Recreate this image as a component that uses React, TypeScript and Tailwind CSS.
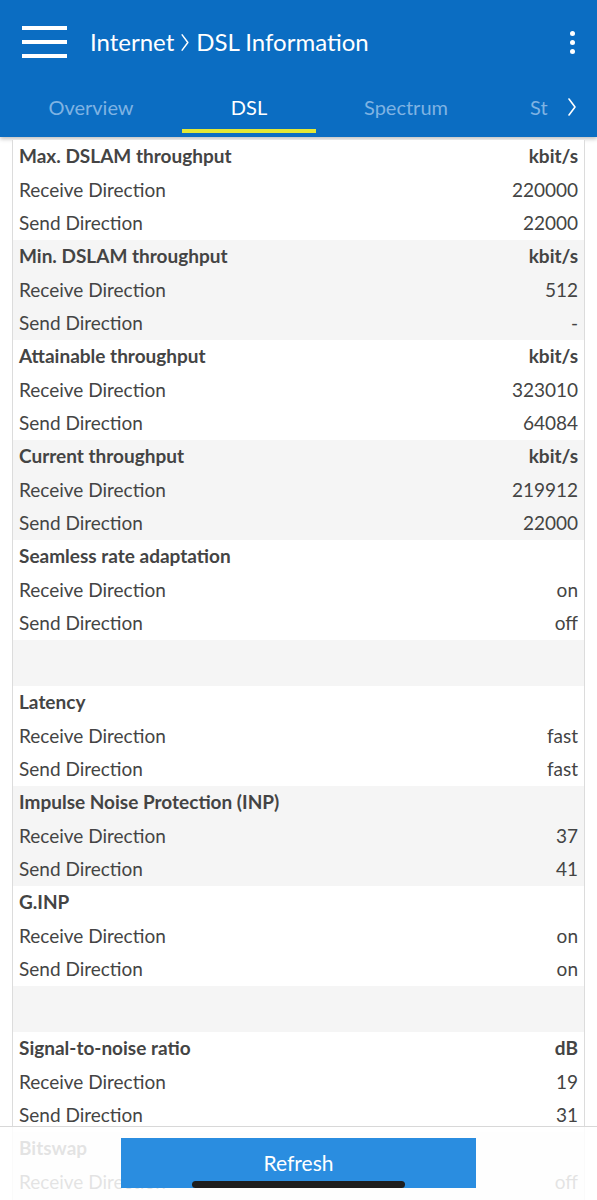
import React from 'react';

type Row = { label: string; value: string };
type Group = { title: string; unit?: string; rows: Row[]; shaded: boolean } | { spacer: true };

const rd = (v: string) => ({ label: 'Receive Direction', value: v });
const sd = (v: string) => ({ label: 'Send Direction', value: v });

const groups: Group[] = [
    { title: 'Max. DSLAM throughput', unit: 'kbit/s', rows: [rd('220000'), sd('22000')], shaded: false },
    { title: 'Min. DSLAM throughput', unit: 'kbit/s', rows: [rd('512'), sd('-')], shaded: true },
    { title: 'Attainable throughput', unit: 'kbit/s', rows: [rd('323010'), sd('64084')], shaded: false },
    { title: 'Current throughput', unit: 'kbit/s', rows: [rd('219912'), sd('22000')], shaded: true },
    { title: 'Seamless rate adaptation', rows: [rd('on'), sd('off')], shaded: false },
    { spacer: true },
    { title: 'Latency', rows: [rd('fast'), sd('fast')], shaded: false },
    { title: 'Impulse Noise Protection (INP)', rows: [rd('37'), sd('41')], shaded: true },
    { title: 'G.INP', rows: [rd('on'), sd('on')], shaded: false },
    { spacer: true },
    { title: 'Signal-to-noise ratio', unit: 'dB', rows: [rd('19'), sd('31')], shaded: false },
    { title: 'Bitswap', rows: [rd('off'), sd('on')], shaded: true },
];

const Chevron = ({ className = '' }: { className?: string }) => (
    <svg viewBox="0 0 10 20" className={className} fill="none" stroke="currentColor" strokeWidth={1.6} strokeLinecap="round" strokeLinejoin="round">
        <path d="M2 2l6 8-6 8" />
    </svg>
);

const App: React.FC = () => {
    return (
        <div className="min-h-screen bg-white text-[#444]" style={{ fontFamily: 'Lato, "Noto Sans", sans-serif' }}>
            {/* Header */}
            <header className="bg-[#0b6dc2] text-white shadow-[0_2px_4px_rgba(0,0,0,0.25)]">
                <div className="h-[84px] flex items-center pl-[22px] pr-[22px]">
                    <div className="flex flex-col gap-[10px] w-[45px]">
                        <span className="block h-[4px] bg-white" />
                        <span className="block h-[4px] bg-white" />
                        <span className="block h-[4px] bg-white" />
                    </div>
                    <div className="ml-[23px] flex items-center text-[24px] leading-none">
                        <span>Internet</span>
                        <Chevron className="w-[10px] h-[19px] mx-[6px]" />
                        <span>DSL Information</span>
                    </div>
                    <div className="ml-auto flex flex-col gap-[4px] items-center">
                        <span className="block w-[5px] h-[5px] rounded-full bg-white" />
                        <span className="block w-[5px] h-[5px] rounded-full bg-white" />
                        <span className="block w-[5px] h-[5px] rounded-full bg-white" />
                    </div>
                </div>
                <div className="h-[53px] flex items-stretch text-[20px] relative">
                    <div className="w-[182px] flex items-center justify-center pb-[7px] text-[#7fb3e3]">Overview</div>
                    <div className="w-[134px] flex flex-col items-center justify-center relative">
                        <span className="pb-[7px]">DSL</span>
                        <span className="absolute left-0 right-0 bottom-[4px] h-[4px] bg-[#e4e834]" />
                    </div>
                    <div className="w-[180px] flex items-center justify-center pb-[7px] text-[#7fb3e3]">Spectrum</div>
                    <div className="flex items-center pl-[34px] pb-[7px] text-[#7fb3e3] whitespace-nowrap">St</div>
                    <div className="ml-auto flex items-center pr-[20px] pb-[7px]">
                        <Chevron className="w-[10px] h-[20px]" />
                    </div>
                </div>
            </header>

            {/* Table */}
            <main className="mx-[12px] mt-[3px] border-x border-[#dcdcdc] text-[19px] pb-[80px]">
                {groups.map((g, i) =>
                    'spacer' in g ? (
                        <div key={i} className="h-[46px] bg-[#f5f5f5]" />
                    ) : (
                        <div key={i} className={g.shaded ? 'bg-[#f5f5f5]' : 'bg-white'}>
                            <div className="h-[33.4px] flex items-center justify-between px-[6px] font-bold text-[#444]">
                                <span>{g.title}</span>
                                {g.unit && <span>{g.unit}</span>}
                            </div>
                            {g.rows.map((r, j) => (
                                <div key={j} className="h-[33.3px] flex items-center justify-between px-[6px]">
                                    <span>{r.label}</span>
                                    <span>{r.value}</span>
                                </div>
                            ))}
                        </div>
                    )
                )}
            </main>

            {/* Bottom bar */}
            <div className="fixed left-0 right-0 bottom-0 h-[74px] bg-white/85 border-t border-[#d8d8d8] flex justify-center pt-[11px]">
                <button className="w-[355px] h-[50px] bg-[#2a8de0] text-white text-[21px] flex items-center justify-center">
                    Refresh
                </button>
                <span className="absolute bottom-[12px] left-[192px] w-[213px] h-[7px] rounded-full bg-[#1e1e1e]" />
            </div>
        </div>
    );
};

export default App;
